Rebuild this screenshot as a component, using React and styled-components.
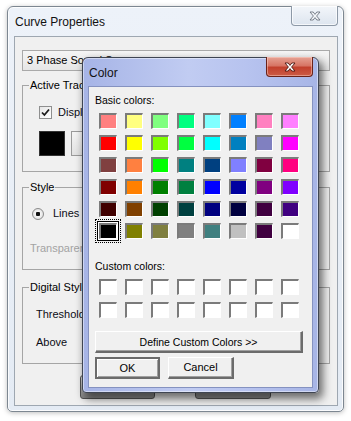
import React from 'react'
import styled, { createGlobalStyle } from 'styled-components'

const GlobalStyle = createGlobalStyle`
  html, body { margin: 0; padding: 0; background: #fff; }
  body {
    font-family: "Liberation Sans", Arial, sans-serif;
    width: 351px;
    height: 421px;
    overflow: hidden;
  }
  * { box-sizing: border-box; }
`

const BASIC = [
	'#FF8080', '#FFFF80', '#80FF80', '#00FF80', '#80FFFF', '#0080FF', '#FF80C0', '#FF80FF',
	'#FF0000', '#FFFF00', '#80FF00', '#00FF40', '#00FFFF', '#0080C0', '#8080C0', '#FF00FF',
	'#804040', '#FF8040', '#00FF00', '#008080', '#004080', '#8080FF', '#800040', '#FF0080',
	'#800000', '#FF8000', '#008000', '#008040', '#0000FF', '#0000A0', '#800080', '#8000FF',
	'#400000', '#804000', '#004000', '#004040', '#000080', '#000040', '#400040', '#400080',
	'#000000', '#808000', '#808040', '#808080', '#408080', '#C0C0C0', '#400040', '#FFFFFF',
]

const CloseGlyph = ({ fill, stroke }) => (
	<svg width="12" height="10" viewBox="0 0 12 10">
		<path
			d="M1 1H4.2L6 3.4L7.8 1H11L7.6 5L11 9H7.8L6 6.6L4.2 9H1L4.4 5Z"
			fill={fill}
			stroke={stroke}
			strokeWidth="0.9"
			strokeLinejoin="round"
		/>
	</svg>
)

const CheckMark = () => (
	<svg width="9" height="9" viewBox="0 0 9 9">
		<path d="M1 4.5L3.4 7L8 1.5" fill="none" stroke="#1a1a1a" strokeWidth="1.8" />
	</svg>
)

export default function App() {
	return (
		<>
			<GlobalStyle />
			<Stage>
				<Window>
					<TitleBar>
						<Title>Curve Properties</Title>
						<CloseButton>
							<CloseGlyph fill="#f4f6f9" stroke="#6d7580" />
						</CloseButton>
					</TitleBar>
					<Client>
						<Combo>3 Phase Sound Source</Combo>

						<Group height={87} gap={14}>
							<Legend>Active Trace</Legend>
							<Row top={14} left={16}>
								<CheckBox><CheckMark /></CheckBox>
								<Label>Display</Label>
							</Row>
							<Row top={12} left={16}>
								<ColorBox />
								<PickButton />
							</Row>
						</Group>

						<Group height={83} gap={15}>
							<Legend>Style</Legend>
							<Row top={13} left={9}>
								<Radio />
								<Label>Lines</Label>
							</Row>
							<Row top={22} left={7}>
								<Label muted>Transparency</Label>
							</Row>
						</Group>

						<Group height={77} gap={17}>
							<Legend>Digital Style</Legend>
							<Row top={14} left={13}>
								<Label>Threshold</Label>
							</Row>
							<Row top={15} left={13}>
								<Label>Above</Label>
							</Row>
						</Group>

						<ButtonRow>
							<WinButton width={75} />
							<WinButton width={76} />
						</ButtonRow>
					</Client>
				</Window>

				<ColorDialog>
					<DialogTitleBar>
						<Title>Color</Title>
						<RedClose>
							<CloseGlyph fill="#ffffff" stroke="#4a1410" />
						</RedClose>
					</DialogTitleBar>
					<DialogClient>
						<SmallLabel top={7}>Basic colors:</SmallLabel>
						<SwatchGrid top={7} rowGap={6}>
							{BASIC.map((c, i) => (
								<Swatch key={i} color={c} selected={i === 40} />
							))}
						</SwatchGrid>
						<SmallLabel top={21}>Custom colors:</SmallLabel>
						<SwatchGrid top={7} rowGap={7}>
							{Array.from({ length: 16 }).map((_, i) => (
								<Swatch key={i} color="#ffffff" />
							))}
						</SwatchGrid>
						<DefineButton>Define Custom Colors &gt;&gt;</DefineButton>
						<ActionRow>
							<DialogButton primary width={65}>OK</DialogButton>
							<DialogButton width={66}>Cancel</DialogButton>
						</ActionRow>
					</DialogClient>
				</ColorDialog>
			</Stage>
		</>
	)
}

const Stage = styled.div`
	position: relative;
	width: 351px;
	height: 421px;
	padding: 6px 0 0 7px;
`

const Window = styled.div`
	width: 337px;
	height: 406px;
	display: flex;
	flex-direction: column;
	border: 1px solid #7d8791;
	border-radius: 6px 6px 5px 5px;
	background: linear-gradient(#edf2f9, #e4ebf4);
	box-shadow: 0 1px 5px rgba(0, 0, 0, 0.25), inset 0 0 0 1px rgba(255, 255, 255, 0.8);
`

const TitleBar = styled.div`
	height: 29px;
	display: flex;
	justify-content: space-between;
	align-items: flex-start;
	padding: 0 5px 0 7px;
`

const Title = styled.div`
	font-size: 12px;
	color: #111;
	line-height: 14px;
	padding-top: 8px;
`

const CloseButton = styled.div`
	width: 47px;
	height: 20px;
	margin-top: -1px;
	display: flex;
	align-items: center;
	justify-content: center;
	border: 1px solid #8d99a7;
	border-top: none;
	border-radius: 0 0 4px 4px;
	background: linear-gradient(#f3f6fa, #dde5ef);
	box-shadow: inset 0 0 0 1px rgba(255, 255, 255, 0.7);
`

const Client = styled.div`
	flex: 1;
	margin: 0 5px 5px 6px;
	border: 1px solid #9ea7b1;
	background: #f0f0f0;
	display: flex;
	flex-direction: column;
	padding: 0 7px;
	font-size: 11px;
	color: #000;
`

const Combo = styled.div`
	margin-top: 13px;
	height: 21px;
	border: 1px solid #a9a9a9;
	background: linear-gradient(#f5f5f5, #e6e6e6);
	padding-left: 4px;
	line-height: 19px;
	white-space: nowrap;
	overflow: hidden;
`

const Group = styled.div`
	margin-top: ${({ gap }) => gap}px;
	height: ${({ height }) => height}px;
	border: 1px solid #a5a5a5;
	display: flex;
	flex-direction: column;
`

const Legend = styled.div`
	align-self: flex-start;
	margin: -7px 0 0 6px;
	padding: 0 1px;
	height: 13px;
	line-height: 13px;
	background: #f0f0f0;
	white-space: nowrap;
`

const Row = styled.div`
	display: flex;
	align-items: center;
	gap: 6px;
	margin-top: ${({ top }) => top}px;
	padding-left: ${({ left }) => left}px;
	min-height: 13px;
	line-height: 13px;
`

const Label = styled.span`
	color: ${({ muted }) => (muted ? '#a3a3a3' : '#0c0c14')};
	white-space: nowrap;
`

const CheckBox = styled.span`
	width: 13px;
	height: 13px;
	border: 1px solid #8e8f8f;
	background: linear-gradient(135deg, #e6e6e6, #ffffff);
	display: flex;
	align-items: center;
	justify-content: center;
`

const Radio = styled.span`
	width: 12px;
	height: 12px;
	border-radius: 50%;
	border: 1px solid #8b8b8b;
	background: radial-gradient(circle, #111 0 2px, #f4f4f4 2.5px, #dcdcdc 6px);
	margin-right: 3px;
`

const ColorBox = styled.span`
	width: 26px;
	height: 25px;
	background: #000;
	border: 1px solid #333;
`

const PickButton = styled.span`
	width: 40px;
	height: 25px;
	border: 1px solid #9a9a9a;
	background: linear-gradient(#f4f4f4, #e2e2e2);
`

const ButtonRow = styled.div`
	display: flex;
	gap: 40px;
	margin-top: 11px;
	padding-left: 58px;
`

const WinButton = styled.span`
	width: ${({ width }) => width}px;
	height: 24px;
	border: 1px solid #555;
	border-radius: 3px;
	background: linear-gradient(#d8d8d8, #8a8a8a);
`

const ColorDialog = styled.div`
	position: absolute;
	left: 82px;
	top: 57px;
	width: 237px;
	height: 336px;
	display: flex;
	flex-direction: column;
	border: 1px solid #3f4552;
	border-radius: 6px 6px 4px 4px;
	background: linear-gradient(to right, #a6b4e6, #c1ccf2 45%, #b7c3ef 70%, #a7b5e6);
	box-shadow: 3px 5px 8px 1px rgba(0, 0, 0, 0.55), inset 0 0 0 1px rgba(255, 255, 255, 0.45);
`

const DialogTitleBar = styled.div`
	height: 28px;
	display: flex;
	justify-content: space-between;
	align-items: flex-start;
	padding: 0 5px 0 6px;
`

const RedClose = styled.div`
	width: 47px;
	height: 20px;
	margin-top: -1px;
	display: flex;
	align-items: center;
	justify-content: center;
	border: 1px solid #6a2219;
	border-top: none;
	border-radius: 0 0 4px 4px;
	background: linear-gradient(#e6a294 0%, #d77565 45%, #c2402d 55%, #cc5b45 100%);
	box-shadow: inset 0 0 0 1px rgba(255, 220, 210, 0.45);
`

const DialogClient = styled.div`
	flex: 1;
	margin: 0 5px 4px 5px;
	border: 1px solid #8592c0;
	background: #f0f0f0;
	display: flex;
	flex-direction: column;
	padding-left: 6px;
	font-size: 10.5px;
	color: #000;
`

const SmallLabel = styled.div`
	margin-top: ${({ top }) => top}px;
	height: 12px;
	line-height: 12px;
`

const SwatchGrid = styled.div`
	margin-top: ${({ top }) => top}px;
	margin-left: 4px;
	display: grid;
	grid-template-columns: repeat(8, 18px);
	grid-auto-rows: 16px;
	column-gap: 8px;
	row-gap: ${({ rowGap }) => rowGap}px;
`

const Swatch = styled.span`
	background: ${({ color }) => color};
	border-style: solid;
	border-width: 2px 1px 1px 2px;
	border-color: #7b7b7b #ffffff #ffffff #7b7b7b;
	${({ selected }) => selected && `
		box-shadow: 0 0 0 1px #ffffff, 0 0 0 2px #000000;
		outline: 1px dotted #000000;
		outline-offset: 3px;
	`}
`

const DefineButton = styled.div`
	margin-top: 13px;
	width: 208px;
	height: 22px;
	line-height: 20px;
	text-align: center;
	background: #f0f0f0;
	border-style: solid;
	border-width: 1px 2px 2px 1px;
	border-color: #ffffff #6b6b6b #6b6b6b #ffffff;
	box-shadow: inset -1px -1px 0 #a0a0a0;
`

const ActionRow = styled.div`
	margin-top: 4px;
	display: flex;
	gap: 8px;
`

const DialogButton = styled.div`
	width: ${({ width }) => width}px;
	height: 22px;
	line-height: 19px;
	text-align: center;
	font-size: 11px;
	background: #f0f0f0;
	border-style: solid;
	border-width: ${({ primary }) => (primary ? '2px' : '1px 2px 2px 1px')};
	border-color: ${({ primary }) => (primary ? '#6b6b6b' : '#ffffff #6b6b6b #6b6b6b #ffffff')};
	box-shadow: ${({ primary }) => (primary
		? 'inset 1px 1px 0 #ffffff, inset -1px -1px 0 #a0a0a0'
		: 'inset -1px -1px 0 #a0a0a0')};
`
